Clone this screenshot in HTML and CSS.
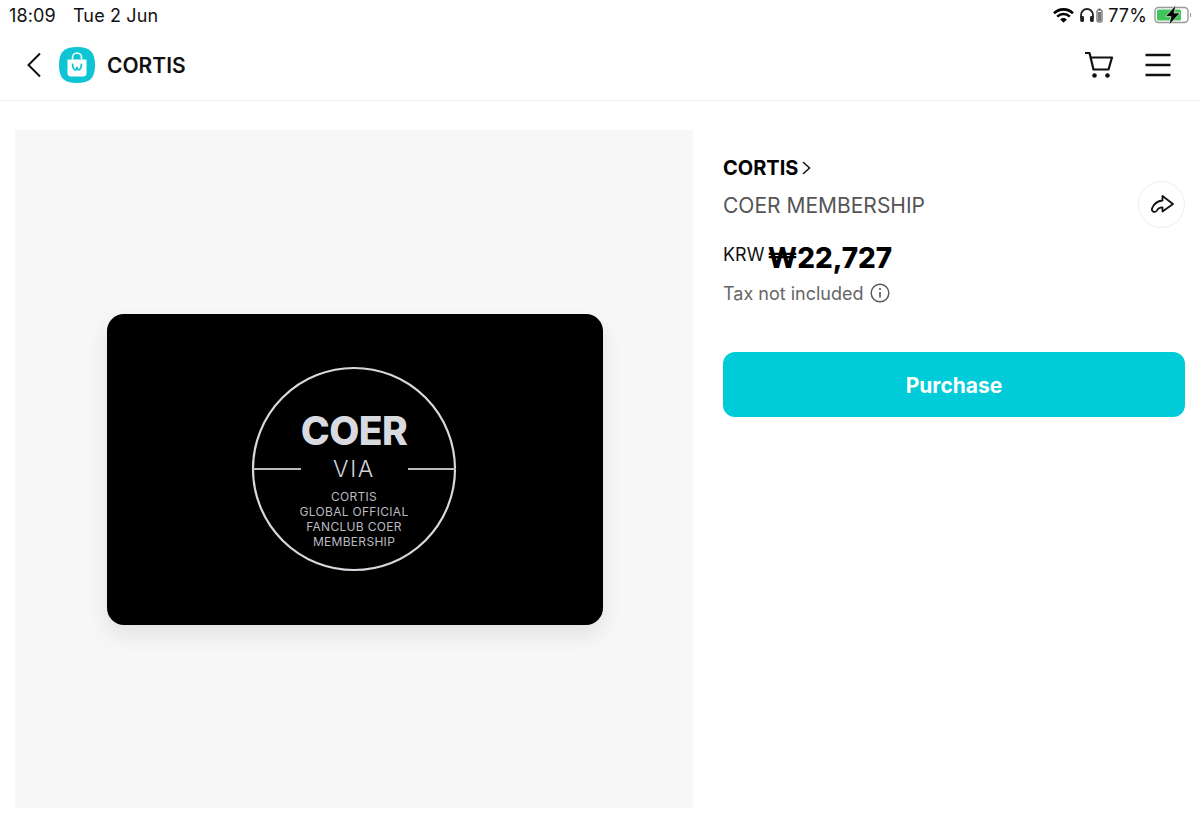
FILE: index.html
```html
<!DOCTYPE html>
<html lang="en">
<head>
    <meta charset="UTF-8">
    <meta name="viewport" content="width=device-width, initial-scale=1.0">
    <title>CORTIS - COER Membership</title>
    <link rel="stylesheet" href="styles.css">
</head>
<body>
    <div class="status-bar">
        <div class="status-left">
            <span>18:09</span>
            <span>Tue 2 Jun</span>
        </div>
        <div class="status-right">
            <svg class="wifi" width="21" height="15" viewBox="0 0 21 15">
                <path d="M1 5.200a13.600 13.600 0 0 1 19 0" fill="none" stroke="#000" stroke-width="2.600"/>
                <path d="M4.200 8.600a9 9 0 0 1 12.600 0" fill="none" stroke="#000" stroke-width="2.600"/>
                <path d="M7.200 11.400a4.600 4.600 0 0 1 6.600 0L10.500 14.800z" fill="#000"/>
            </svg>
            <svg class="headphones" width="24" height="16" viewBox="0 0 24 16">
                <path d="M2 11V8a6 6 0 0 1 12 0v3" fill="none" stroke="#222" stroke-width="1.800"/>
                <rect x="1.200" y="9" width="3.800" height="6" rx="1.400" fill="#222"/>
                <rect x="11" y="9" width="3.800" height="6" rx="1.400" fill="#222"/>
                <rect x="18" y="3" width="5" height="12" rx="1" fill="none" stroke="#444" stroke-width="1"/>
                <rect x="19" y="5" width="3" height="9" fill="#777"/>
                <rect x="19.500" y="1.600" width="2" height="1.400" fill="#444"/>
            </svg>
            <span>77%</span>
            <svg class="battery" width="38" height="20" viewBox="0 0 38 20">
                <rect x="1" y="2.500" width="33" height="15" rx="3.500" fill="none" stroke="#999" stroke-width="1.400"/>
                <rect x="3" y="4.500" width="24" height="11" rx="1.500" fill="#3fc55a"/>
                <path d="M36 7.500c1.500.5 1.500 4.500 0 5z" fill="#999"/>
                <path d="M22 0 11.500 11.500h5.500L15 20l11-12h-6z" fill="#000" stroke="#fff" stroke-width=".6"/>
            </svg>
        </div>
    </div>

    <header class="top-bar">
        <div class="top-left">
            <svg class="back" width="16" height="26" viewBox="0 0 16 26">
                <path d="M14 1.500 2.500 13 14 24.500" fill="none" stroke="#111" stroke-width="2"/>
            </svg>
            <svg class="app-icon" width="36" height="36" viewBox="0 0 36 36">
                <path d="M18 0c13 0 18 5 18 18s-5 18-18 18S0 31 0 18 5 0 18 0z" fill="#0fc4d3"/>
                <path d="M8.500 12.500h19v13.500a3.500 3.500 0 0 1-3.500 3.500H12a3.500 3.500 0 0 1-3.500-3.500z" fill="#fff"/>
                <path d="M13.500 12.500V10.500a4.500 4.500 0 0 1 9 0v2" fill="none" stroke="#fff" stroke-width="1.600"/>
                <path d="M13.600 17.500c.3 4.200 1.600 5.300 2.700 5.300 1.200 0 1.700-1.400 1.700-3 0 1.600.5 3 1.700 3 1.100 0 2.400-1.100 2.700-5.300" fill="none" stroke="#0fc4d3" stroke-width="1.800" stroke-linecap="round"/>
            </svg>
            <span class="brand">CORTIS</span>
        </div>
        <div class="top-right">
            <svg width="30" height="28" viewBox="0 0 30 28">
                <path d="M1 2h4.500l4 16.500h15L28 6.500H6.500" fill="none" stroke="#111" stroke-width="2.200" stroke-linejoin="round"/>
                <circle cx="10.500" cy="24.500" r="2.300" fill="#111"/>
                <circle cx="23.500" cy="24.500" r="2.300" fill="#111"/>
            </svg>
            <svg width="26" height="24" viewBox="0 0 26 24">
                <path d="M.5 2h25M.5 12h25M.5 22h25" fill="none" stroke="#111" stroke-width="2.400"/>
            </svg>
        </div>
    </header>

    <main class="product">
        <div class="product-image">
            <div class="member-card">
                <svg class="emblem" width="206" height="206" viewBox="0 0 206 206">
                    <circle cx="103" cy="103" r="101" fill="none" stroke="#d6d8de" stroke-width="2.200"/>
                    <path d="M2 103h48M157 103h48" stroke="#b9bbc1" stroke-width="2"/>
                    <text class="emblem-title" x="103" y="79" text-anchor="middle">COER</text>
                    <text class="emblem-via" x="103" y="111" text-anchor="middle">VIA</text>
                    <text class="emblem-small" x="103" y="135" text-anchor="middle">CORTIS</text>
                    <text class="emblem-small" x="103" y="150" text-anchor="middle">GLOBAL OFFICIAL</text>
                    <text class="emblem-small" x="103" y="165" text-anchor="middle">FANCLUB COER</text>
                    <text class="emblem-small" x="103" y="180" text-anchor="middle">MEMBERSHIP</text>
                </svg>
            </div>
        </div>

        <div class="product-info">
            <a class="artist-link" href="#">
                CORTIS
                <svg width="9" height="14" viewBox="0 0 9 14">
                    <path d="M1 1l6.500 6L1 13" fill="none" stroke="#111" stroke-width="1.500"/>
                </svg>
            </a>
            <div class="title-row">
                <span class="product-name">COER MEMBERSHIP</span>
                <button class="share-btn">
                    <svg width="24" height="22" viewBox="0 0 24 22">
                        <path d="M12.500 2 23 10l-10.500 7.500v-4.200c-3 0-4.600 1-5.700 3.300-.7 1.200-2.300 1.500-3.500 1-1.300-.6-1.700-2-1.100-3.500 1.700-4.400 5-7 10.300-7.600z" fill="none" stroke="#111" stroke-width="1.800" stroke-linejoin="round"/>
                    </svg>
                </button>
            </div>
            <div class="price-row">
                <span class="currency">KRW</span>
                <span class="price">₩22,727</span>
            </div>
            <div class="tax-note">
                Tax not included
                <svg width="20" height="20" viewBox="0 0 20 20">
                    <circle cx="10" cy="10" r="8.800" fill="none" stroke="#555" stroke-width="1.400"/>
                    <path d="M10 9v5.500" stroke="#555" stroke-width="1.600"/>
                    <circle cx="10" cy="6" r="1.100" fill="#555"/>
                </svg>
            </div>
            <button class="purchase-btn">Purchase</button>
        </div>
    </main>
</body>
</html>
```

FILE: styles.css
```css
body {
    font-family: 'Inter', 'Liberation Sans', sans-serif;
    margin: 0;
    padding: 0;
    background: white;
    color: #111;
    overflow: hidden;
}

.status-bar {
    display: flex;
    justify-content: space-between;
    align-items: center;
    height: 30px;
    padding: 0 8px 0 9px;
    font-size: 18px;
    letter-spacing: 0.15px;
    color: #111;
}

.status-left {
    display: flex;
    gap: 17px;
}

.status-right {
    display: flex;
    align-items: center;
    gap: 5px;
}

.status-right span {
    margin-right: 2px;
}

.top-bar {
    display: flex;
    justify-content: space-between;
    align-items: center;
    height: 70px;
    padding: 0 29px 0 26px;
    border-bottom: 1px solid #eeeeee;
}

.top-left {
    display: flex;
    align-items: center;
}

.back {
    margin-right: 17px;
}

.brand {
    margin-left: 12px;
    font-size: 21px;
    font-weight: 600;
}

.top-right {
    display: flex;
    align-items: center;
    gap: 31px;
}

.product {
    display: flex;
    gap: 30px;
    padding: 29px 15px 0;
}

.product-image {
    display: flex;
    justify-content: center;
    align-items: center;
    flex: none;
    width: 678px;
    height: 678px;
    background-color: #f7f7f7;
}

.member-card {
    display: flex;
    justify-content: center;
    align-items: center;
    width: 496px;
    height: 311px;
    margin-left: 2px;
    background: black;
    border-radius: 17px;
    box-shadow: 0 10px 22px rgba(0, 0, 0, 0.09);
}

.emblem {
    margin-left: -2px;
}

.emblem-title {
    font-size: 39px;
    font-weight: 800;
    letter-spacing: -0.6px;
    fill: #d8dae0;
}

.emblem-via {
    font-size: 23px;
    font-weight: 300;
    letter-spacing: 1.6px;
    fill: #d0d2d8;
}

.emblem-small {
    font-size: 12px;
    letter-spacing: 0.3px;
    fill: #b9bbc1;
}

.product-info {
    flex: 1;
    padding-top: 26px;
}

.artist-link {
    display: flex;
    align-items: center;
    gap: 4px;
    height: 24px;
    font-size: 20px;
    font-weight: 700;
    color: #000;
    text-decoration: none;
}

.title-row {
    display: flex;
    justify-content: space-between;
    align-items: flex-start;
    height: 59px;
    margin-top: 1px;
}

.product-name {
    margin-top: 12px;
    font-size: 21px;
    color: #555;
}

.share-btn {
    display: flex;
    justify-content: center;
    align-items: center;
    width: 47px;
    height: 47px;
    margin-top: 0;
    padding: 0;
    background: white;
    border: 1px solid #eeeeee;
    border-radius: 50%;
}

.price-row {
    display: flex;
    align-items: flex-start;
    gap: 3px;
    height: 39px;
}

.currency {
    margin-top: 4px;
    font-size: 18px;
}

.price {
    margin-top: 1px;
    font-size: 27.8px;
    font-weight: 800;
    line-height: 35px;
    color: #000;
}

.tax-note {
    display: flex;
    align-items: center;
    gap: 6px;
    height: 28px;
    font-size: 18px;
    color: #666;
}

.purchase-btn {
    display: block;
    width: 100%;
    height: 65px;
    margin-top: 45px;
    padding-top: 2px;
    background-color: #00cbd8;
    border: none;
    border-radius: 12px;
    color: white;
    font-family: inherit;
    font-size: 21px;
    font-weight: 700;
}
```
